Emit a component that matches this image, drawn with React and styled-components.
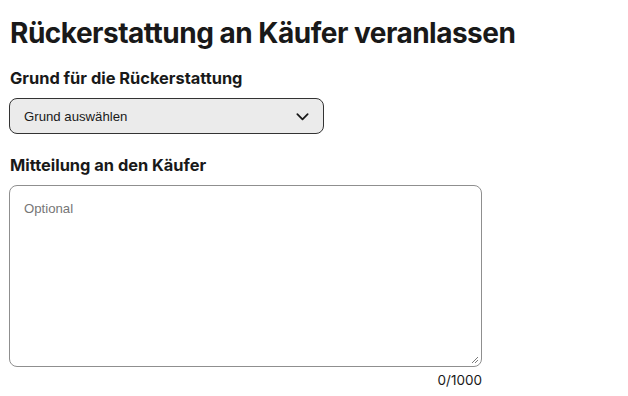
import styled, { createGlobalStyle } from "styled-components";

const GlobalStyle = createGlobalStyle`
  * { box-sizing: border-box; }
  body {
    margin: 0;
    background: #fff;
    font-family: "Inter", "Liberation Sans", sans-serif;
    color: #191919;
  }
`;

const Page = styled.main`
  padding: 16px 10px 0 10px;
  display: flex;
  flex-direction: column;
`;

const Title = styled.h1`
  font-size: 28px;
  font-weight: 700;
  margin: 0 0 18px 0;
  line-height: 34px;
  letter-spacing: -0.5px;
`;

const Field = styled.div`
  display: flex;
  flex-direction: column;
  width: ${({ $width }) => $width}px;
  margin-bottom: ${({ $gap }) => $gap || 0}px;
`;

const Label = styled.label`
  font-size: 16.4px;
  font-weight: 700;
  line-height: 20px;
  margin: 0 0 10px 0;
`;

const SelectBox = styled.div`
  display: flex;
  align-items: center;
  justify-content: space-between;
  height: 36px;
  margin-left: -1px;
  padding: 0 13px 0 14px;
  background: #ebebeb;
  border: 1px solid #333;
  border-radius: 8px;
  font-family: "Liberation Sans", Arial, sans-serif;
  font-size: 13.2px;
  color: #191919;
`;

const TextArea = styled.div`
  position: relative;
  height: 182px;
  margin-left: -1px;
  padding: 15px 14px;
  border: 1px solid #8f8f8f;
  border-radius: 8px;
  font-family: "Liberation Sans", Arial, sans-serif;
  font-size: 13.2px;
  color: #767676;
`;

const Grip = styled.svg`
  position: absolute;
  right: 2px;
  bottom: 2px;
`;

const Counter = styled.div`
  align-self: flex-end;
  margin-top: 5px;
  font-size: 13.5px;
  color: #191919;
`;

export default function App() {
  return (
    <>
      <GlobalStyle />
      <Page>
        <Title>Rückerstattung an Käufer veranlassen</Title>
        <Field $width={314} $gap={21}>
          <Label>Grund für die Rückerstattung</Label>
          <SelectBox>
            <span>Grund auswählen</span>
            <svg width="15" height="15" viewBox="0 0 16 16" fill="none">
              <path d="M2.5 5.5 L8 11 L13.5 5.5" stroke="#191919" strokeWidth="1.9" strokeLinecap="round" strokeLinejoin="round" />
            </svg>
          </SelectBox>
        </Field>
        <Field $width={472}>
          <Label>Mitteilung an den Käufer</Label>
          <TextArea>
            Optional
            <Grip width="9" height="9" viewBox="0 0 9 9">
              <path d="M8 2 L2 8 M8 5 L5 8" stroke="#7a7a7a" strokeWidth="1" />
            </Grip>
          </TextArea>
          <Counter>0/1000</Counter>
        </Field>
      </Page>
    </>
  );
}
